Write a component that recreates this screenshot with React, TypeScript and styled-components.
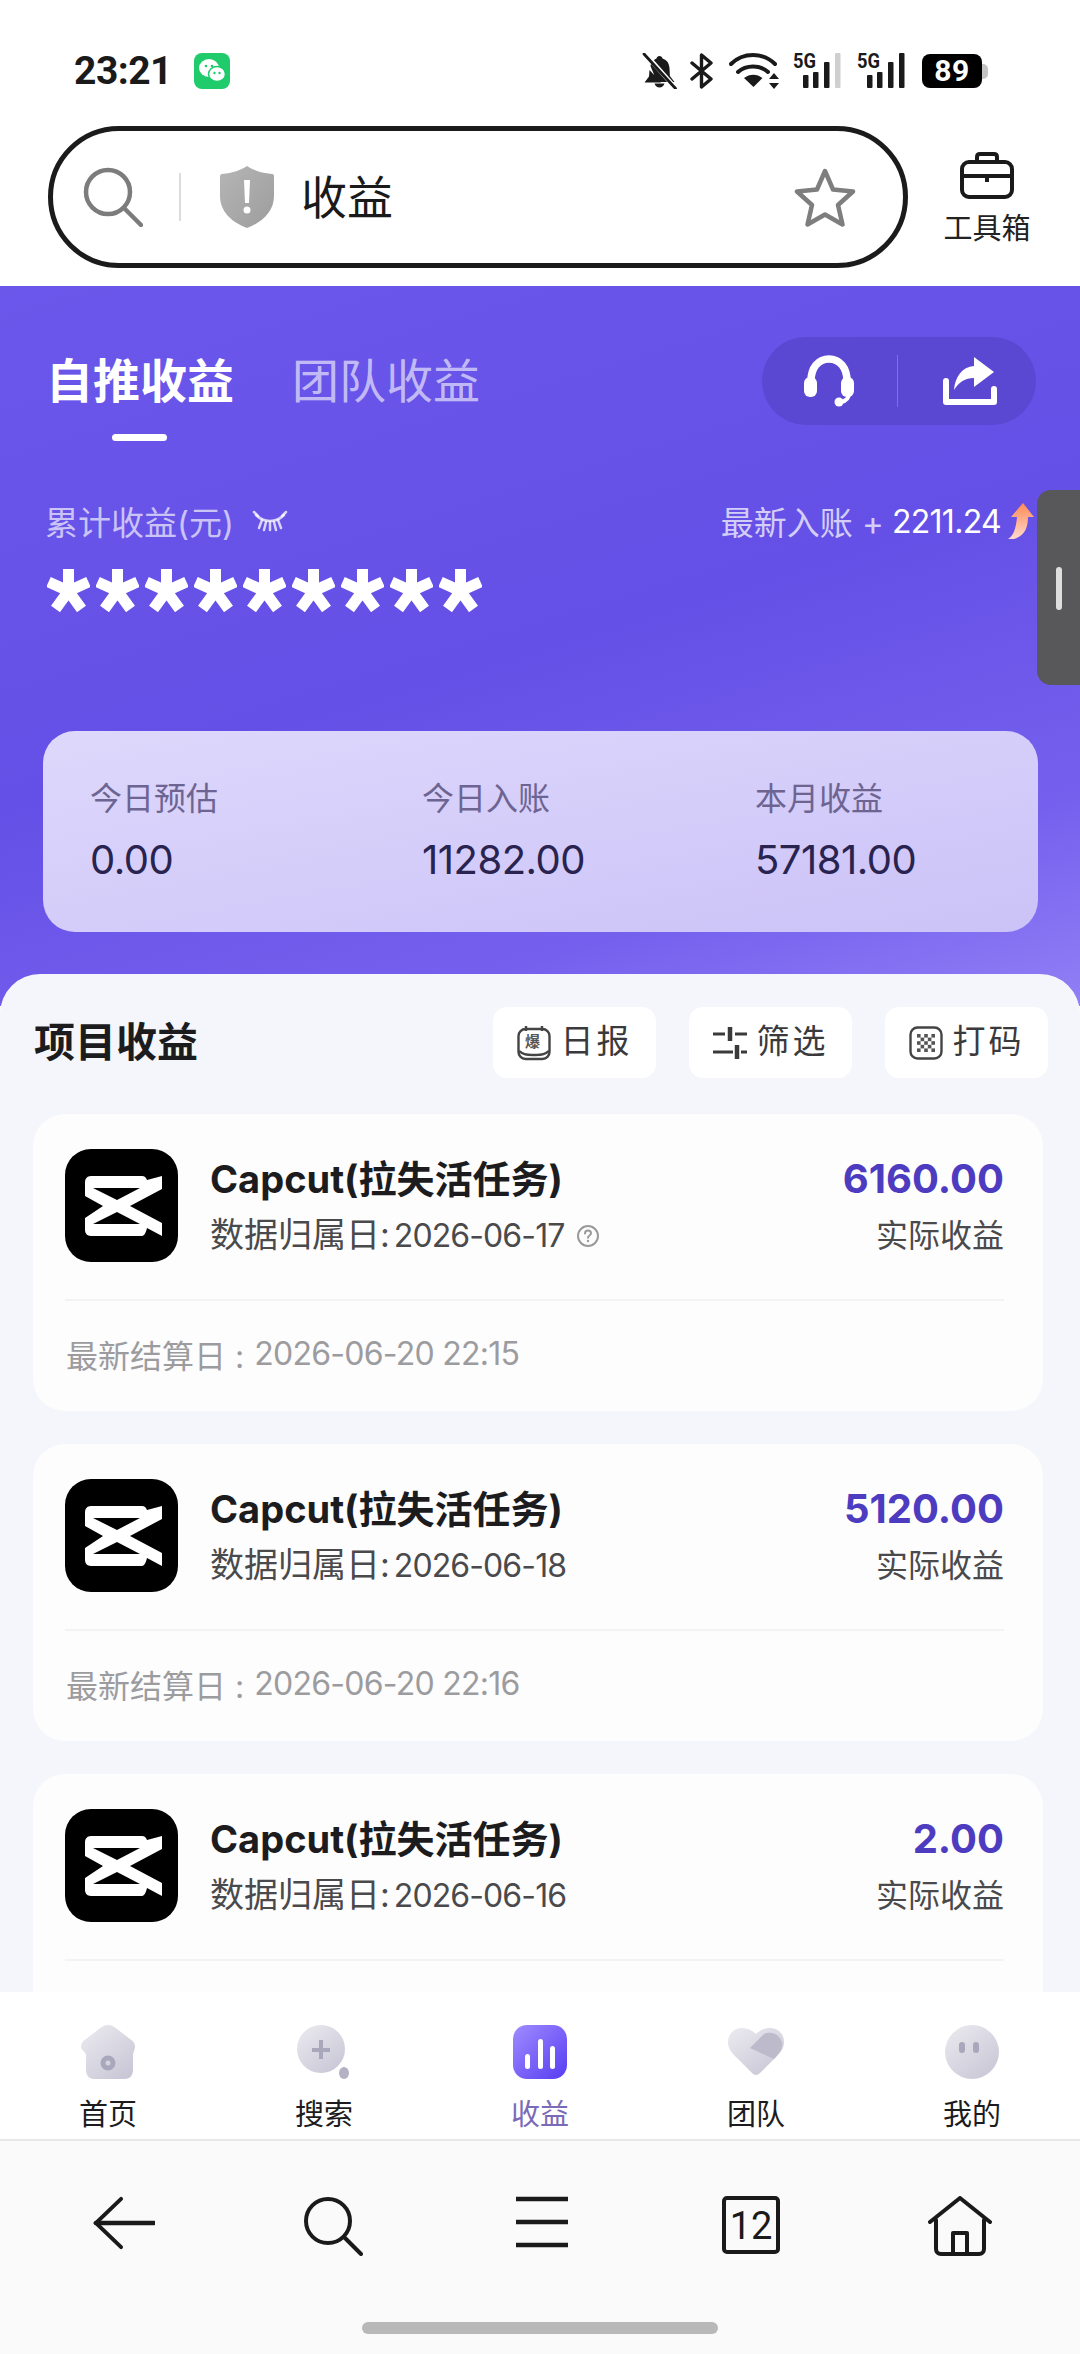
import { ReactNode } from "react";
import styled, { createGlobalStyle } from "styled-components";

const GlobalStyle = createGlobalStyle`
  html, body {
    margin: 0;
    padding: 0;
    background: #fff;
  }
  * {
    box-sizing: border-box;
  }
`;

const FONT = `Inter, Roboto, "Noto Sans CJK SC", sans-serif`;

const Page = styled.div`
  position: relative;
  width: 1080px;
  height: 2354px;
  overflow: hidden;
  display: flex;
  flex-direction: column;
  font-family: ${FONT};
  background: #fff;
  color: #1c1c1e;
`;

/* status bar */
const StatusBar = styled.div`
  height: 126px;
  flex: none;
  padding: 52px 98px 0 74px;
  display: flex;
  align-items: flex-start;
  justify-content: space-between;
`;
const StatusLeft = styled.div`
  display: flex;
  align-items: center;
  gap: 22px;
  height: 38px;
`;
const Clock = styled.span`
  font-family: Roboto, sans-serif;
  font-size: 39px;
  font-weight: 700;
  letter-spacing: -0.5px;
  color: #1a1a1a;
`;
const WeChat = styled.div`
  width: 36px;
  height: 36px;
  border-radius: 8px;
  background: #1fcb6b;
  display: flex;
  align-items: center;
  justify-content: center;
`;
const StatusRight = styled.div`
  display: flex;
  align-items: center;
  height: 38px;
`;
const StatusSlot = styled.div<{ $gap: number }>`
  display: flex;
  margin-left: ${(p) => p.$gap}px;
`;
const Battery = styled.div`
  position: relative;
  width: 60px;
  height: 34px;
  border-radius: 8px;
  background: #000;
  color: #fff;
  font-family: Roboto, sans-serif;
  font-size: 30px;
  font-weight: 700;
  line-height: 34px;
  text-align: center;
  letter-spacing: 0.5px;
`;
const BatteryNub = styled.span`
  position: absolute;
  right: -6px;
  top: 10px;
  width: 6px;
  height: 15px;
  border-radius: 0 5px 5px 0;
  background: #c4c4c4;
`;

/* address bar */
const AddressRow = styled.div`
  height: 160px;
  flex: none;
  padding-left: 48px;
  display: flex;
  align-items: flex-start;
`;
const SearchBox = styled.div`
  width: 860px;
  height: 142px;
  border: 5px solid #1b1b1b;
  border-radius: 71px;
  display: flex;
  align-items: center;
  padding-left: 30px;
`;
const SearchDivider = styled.div`
  width: 2px;
  height: 48px;
  margin: 0 39px 0 36px;
  background: #dcdcdc;
`;
const AddressText = styled.span`
  flex: 1;
  margin-left: 27px;
  font-size: 46px;
  line-height: 60px;
  color: #1a1a1a;
`;
const StarSlot = styled.div`
  margin-right: 47px;
  display: flex;
`;
const ToolBox = styled.div`
  width: 158px;
  padding-top: 26px;
  display: flex;
  flex-direction: column;
  align-items: center;
  gap: 14px;
  font-size: 29px;
  line-height: 32px;
  color: #222;
`;

/* purple area */
const Body = styled.div`
  flex: 1;
  min-height: 0;
  display: flex;
  flex-direction: column;
  background: linear-gradient(163deg, #6b57ea 0, #6450e6 50%, #7560ee 80%, #917ff5 100%) no-repeat;
  background-size: 100% 720px;
`;
const Hero = styled.div`
  flex: none;
  height: 688px;
  padding: 51px 42px 0 43px;
  color: #fff;
`;
const TabRow = styled.div`
  display: flex;
  align-items: center;
  justify-content: space-between;
  height: 88px;
`;
const Tabs = styled.div`
  display: flex;
  gap: 58px;
  padding-left: 3px;
`;
const Tab = styled.span<{ $active?: boolean }>`
  font-size: 47px;
  line-height: 60px;
  font-weight: ${(p) => (p.$active ? 700 : 400)};
  color: ${(p) => (p.$active ? "#fff" : "rgba(255,255,255,0.62)")};
`;
const ActionPill = styled.div`
  width: 274px;
  height: 88px;
  margin-right: 2px;
  border-radius: 44px;
  background: #5b48d2;
  display: flex;
  align-items: center;
  padding-left: 42px;
`;
const PillDivider = styled.div`
  width: 1px;
  height: 52px;
  margin: 0 45px 0 43px;
  background: rgba(255, 255, 255, 0.22);
`;
const TabIndicator = styled.div`
  width: 55px;
  height: 7px;
  border-radius: 4px;
  margin: 9px 0 0 69px;
  background: #fff;
`;
const SummaryRow = styled.div`
  display: flex;
  align-items: center;
  justify-content: space-between;
  height: 36px;
  margin-top: 62px;
  padding: 0 4px 0 2px;
`;
const SummaryLabel = styled.div`
  display: flex;
  align-items: center;
  gap: 18px;
  font-size: 33px;
  color: rgba(255, 255, 255, 0.66);
`;
const LatestEntry = styled.div`
  display: flex;
  align-items: center;
  font-size: 33px;
  color: rgba(255, 255, 255, 0.72);
`;
const LatestValue = styled.span`
  margin: 0 7px 0 8px;
  font-size: 32px;
  color: #fff;
  letter-spacing: -0.7px;
`;
const Masked = styled.div`
  margin-top: 16px;
  height: 70px;
  padding-left: 4px;
  display: flex;
  gap: 6px;
  align-items: center;
`;
const StatsCard = styled.div`
  height: 201px;
  margin-top: 106px;
  padding: 48px 0 0 47px;
  border-radius: 32px;
  display: grid;
  grid-template-columns: 332px 333px 1fr;
  background: linear-gradient(170deg, #ded8fc 0%, #cbc2f7 100%);
`;
const StatCell = styled.div`
  display: flex;
  flex-direction: column;
`;
const StatLabel = styled.span`
  font-size: 32px;
  line-height: 40px;
  color: #6d6492;
`;
const StatValue = styled.span`
  margin-top: 15px;
  font-size: 40px;
  line-height: 52px;
  letter-spacing: -0.5px;
  color: #29234f;
`;

/* white sheet */
const Sheet = styled.div`
  flex: 1;
  min-height: 0;
  overflow: hidden;
  border-radius: 40px 40px 0 0;
  background: #f5f6fb;
`;
const SheetHead = styled.div`
  display: flex;
  align-items: center;
  padding: 33px 32px 0 34px;
`;
const SheetTitle = styled.h2`
  flex: 1;
  margin: 0;
  padding-bottom: 8px;
  font-size: 41px;
  font-weight: 700;
  color: #1c1c1e;
`;
const HeadButtons = styled.div`
  display: flex;
  gap: 33px;
`;
const HeadButton = styled.div`
  width: 163px;
  height: 71px;
  border-radius: 14px;
  background: #fff;
  display: flex;
  align-items: center;
  justify-content: center;
  gap: 10px;
  font-size: 33px;
  letter-spacing: 3px;
  color: #3a3a3c;
`;
const ButtonLabel = styled.span`
  padding-bottom: 7px;
`;
const CardList = styled.div`
  display: flex;
  flex-direction: column;
  gap: 33px;
  margin: 36px 37px 0 33px;
`;
const Card = styled.div`
  flex: none;
  height: 297px;
  border-radius: 32px;
  background: #fdfdfe;
  padding: 35px 39px 0 32px;
`;
const CardTop = styled.div`
  display: flex;
  height: 115px;
`;
const AppIcon = styled.div`
  flex: none;
  width: 113px;
  height: 113px;
  border-radius: 26px;
  background: #000;
  display: flex;
`;
const CardText = styled.div`
  flex: 1;
  padding: 7px 0 0 32px;
`;
const CardTitle = styled.div`
  font-size: 38px;
  line-height: 46px;
  font-weight: 700;
  color: #1c1c1e;
`;
const CardSub = styled.div`
  margin-top: 13px;
  display: flex;
  align-items: center;
  gap: 12px;
  font-size: 34px;
  line-height: 40px;
  color: #4a4a4c;
`;
const DateText = styled.span`
  margin-left: 4px;
  font-size: 32px;
  letter-spacing: -0.9px;
`;
const CardAmounts = styled.div`
  padding-top: 7px;
  text-align: right;
`;
const Amount = styled.div`
  font-size: 40px;
  line-height: 46px;
  font-weight: 700;
  color: #4e3cc0;
`;
const AmountLabel = styled.div`
  margin-top: 14px;
  font-size: 32px;
  line-height: 40px;
  color: #4a4a4c;
`;
const CardRule = styled.div`
  height: 2px;
  margin-top: 35px;
  background: #f3f3f6;
`;
const CardFoot = styled.div`
  height: 105px;
  display: flex;
  align-items: center;
  gap: 10px;
  padding-left: 1px;
  font-size: 32px;
  color: #9c9c9f;
`;
const FootDate = styled.span`
  letter-spacing: -0.75px;
`;

/* app tab bar */
const AppTabs = styled.nav`
  flex: none;
  height: 149px;
  padding-top: 33px;
  display: grid;
  grid-template-columns: repeat(5, 1fr);
  background: #fff;
  border-bottom: 2px solid #e8e8e8;
`;
const AppTab = styled.div<{ $active?: boolean }>`
  display: flex;
  flex-direction: column;
  align-items: center;
  gap: 20px;
  font-size: 29px;
  line-height: 32px;
  color: ${(p) => (p.$active ? "#7a6ab8" : "#1c1c1e")};
`;
const TabGlyph = styled.div`
  height: 54px;
  display: flex;
  align-items: center;
`;

/* browser bar */
const BrowserBar = styled.div`
  flex: none;
  height: 213px;
  background: #fafafa;
  display: flex;
  flex-direction: column;
  align-items: center;
`;
const BrowserIcons = styled.div`
  width: 100%;
  height: 181px;
  padding: 55px 16px 0 19px;
  display: grid;
  grid-template-columns: repeat(5, 1fr);
  justify-items: center;
  align-items: start;
`;
const HomeBar = styled.div`
  width: 356px;
  height: 12px;
  border-radius: 6px;
  background: #b8b8b8;
`;

/* overlay */
const SideHandle = styled.div`
  position: absolute;
  top: 490px;
  right: 0;
  width: 43px;
  height: 195px;
  border-radius: 14px 0 0 14px;
  background: #58585a;
`;
const SideGrip = styled.div`
  position: absolute;
  left: 19px;
  top: 77px;
  width: 6px;
  height: 43px;
  border-radius: 3px;
  background: #dedede;
`;

const BellOff = () => (
  <svg width="36" height="36" viewBox="0 0 36 36">
    <path d="M17.5 3c1.6 0 2.700.9 3 2.400 4.600 1.400 6.700 5 7 9.800l.4 7.800 4.600 6H15L8.500 13C8.900 9.500 11.700 6.500 14.500 5.400 14.800 3.900 15.900 3 17.500 3zM7.500 17l11.500 12.500H2.500l4.500-6z M12.500 30.500h10c-.8 2.500-2.800 4-5 4s-4.200-1.500-5-4z" fill="#1a1a1a" />
    <path d="M2.500 0L33.500 35" stroke="#fff" strokeWidth="4.500" />
    <path d="M2 1L33.500 35.500" stroke="#1a1a1a" strokeWidth="2.800" strokeLinecap="round" />
  </svg>
);

const BluetoothIcon = () => (
  <svg width="24" height="36" viewBox="0 0 24 36" fill="none" stroke="#1a1a1a" strokeWidth="3.400" strokeLinecap="round" strokeLinejoin="round">
    <path d="M2 10l19 16-9.500 8V2L21 10 2 26" />
  </svg>
);

const WifiIcon = () => (
  <svg width="50" height="36" viewBox="0 0 50 36">
    <g fill="none" stroke="#1a1a1a" strokeWidth="4" strokeLinecap="round">
      <path d="M2 11C14-1 34-1 46 11" />
      <path d="M9 19c8-7.500 22-7.500 30 0" />
    </g>
    <path d="M15 25c5.500-4.500 13-4.500 18.500 0L24.500 34z" fill="#1a1a1a" />
    <path d="M45 20l-5 6h10zM45 36l-5-6h10z" fill="#1a1a1a" />
  </svg>
);

const Signal = ({ last }: { last: string }) => (
  <svg width="48" height="44" viewBox="0 -4 48 44">
    <text x="0" y="15" fontFamily="Roboto, sans-serif" fontSize="20" fontWeight="700" fill="#1a1a1a" textLength="23" lengthAdjust="spacingAndGlyphs">5G</text>
    <rect x="10" y="22" width="5.500" height="13" rx="1" fill="#1a1a1a" />
    <rect x="20" y="19" width="5.500" height="16" rx="1" fill="#1a1a1a" />
    <rect x="31" y="9" width="5.500" height="26" rx="1" fill="#1a1a1a" />
    <rect x="42" y="0" width="5.500" height="35" rx="1" fill={last} />
  </svg>
);

const MagnifierIcon = ({ color, size, sw }: { color: string; size: number; sw: number }) => (
  <svg width={size} height={size} viewBox="0 0 60 60" fill="none" stroke={color} strokeWidth={sw} strokeLinecap="round">
    <ellipse cx="25" cy="25" rx="22" ry="22" />
    <path d="M41 41l17 17" />
  </svg>
);

const ShieldIcon = () => (
  <svg width="54" height="62" viewBox="0 0 54 62">
    <defs>
      <linearGradient id="shield" x1="0" y1="0" x2="1" y2="1">
        <stop offset="0" stopColor="#b5b5b5" />
        <stop offset="1" stopColor="#9d9d9d" />
      </linearGradient>
    </defs>
    <path d="M27 0c6 4 14 7 25 8 2 0 2 2 2 4v18c0 15-11 26-27 32C11 56 0 45 0 30V12c0-2 0-4 2-4C13 7 21 4 27 0z" fill="url(#shield)" />
    <path d="M24 14h6l-1 23h-4z" fill="#fff" />
    <circle cx="27" cy="44" r="3.500" fill="#fff" />
  </svg>
);

const StarIcon = () => (
  <svg width="62" height="60" viewBox="0 0 62 60" fill="none" stroke="#7e7e7e" strokeWidth="4.500" strokeLinejoin="round">
    <path d="M31 4l8 18.500 20 2-15 13.500 4.500 19.500L31 47.500 13.500 57.500 18 38 3 24.500l20-2z" />
  </svg>
);

const ToolboxIcon = () => (
  <svg width="54" height="47" viewBox="0 0 54 47" fill="none" stroke="#1a1a1a" strokeWidth="4" strokeLinejoin="round">
    <rect x="2" y="10" width="50" height="35" rx="7" />
    <path d="M17 10V5c0-2 1-3 3-3h14c2 0 3 1 3 3v5" />
    <path d="M2 24h50M27 24v6" />
  </svg>
);

const HeadsetIcon = () => (
  <svg width="50" height="52" viewBox="0 0 50 52">
    <path d="M7 26C7 13 14 4 25 4s18 9 18 22" fill="none" stroke="#fff" strokeWidth="7.500" />
    <rect x="0" y="22" width="13" height="20" rx="6" fill="#fff" />
    <rect x="37" y="22" width="13" height="20" rx="6" fill="#fff" />
    <path d="M45 38c0 5-3 8-8 9" fill="none" stroke="#fff" strokeWidth="4" />
    <circle cx="35" cy="47" r="4.500" fill="#fff" />
  </svg>
);

const ShareIcon = () => (
  <svg width="54" height="48" viewBox="0 0 54 48">
    <path d="M3 24v21h48V32" fill="none" stroke="#fff" strokeWidth="6" strokeLinejoin="round" strokeLinecap="round" />
    <path d="M31 0l20 15-20 15v-9C22 21 16 25 11 33 12 20 19 10 31 9z" fill="#fff" />
  </svg>
);

const ClosedEye = () => (
  <svg width="36" height="22" viewBox="0 0 36 22" fill="none" stroke="rgba(255,255,255,0.75)" strokeWidth="2.500" strokeLinecap="round">
    <path d="M4 5c8 8 20 8 28 0" />
    <path d="M2 2l4 4M34 2l-4 4M10 10l-3 8M26 10l3 8M18 12v8M14 12l-2 8M22 12l2 8" />
  </svg>
);

const UpArrow = () => (
  <svg width="26" height="36" viewBox="0 0 26 36">
    <defs>
      <linearGradient id="arrow" x1="0" y1="0" x2="0" y2="1">
        <stop offset="0" stopColor="#ff8a55" />
        <stop offset="1" stopColor="#ffd9cc" />
      </linearGradient>
    </defs>
    <path d="M15 0l11 14h-6c0 10-3 19-14 22H0c5-3 8-10 9-22H3z" fill="url(#arrow)" />
  </svg>
);

const MaskStar = () => (
  <svg width="43" height="43" viewBox="0 0 43 43" fill="none" stroke="#fff" strokeWidth="11">
    <path d="M21.500 22V0M21.500 22L1.500 13M21.500 22L41.500 13M21.500 22L8.500 40M21.500 22L34.500 40" />
  </svg>
);

const DailyIcon = () => (
  <svg width="34" height="36" viewBox="0 0 34 36" fill="none" stroke="#444" strokeWidth="2.400">
    <rect x="1.500" y="4" width="31" height="30" rx="7" />
    <path d="M9 1v5M25 1v5M2 26c4 3 6 4 15 4s11-1 15-4" />
    <text x="17" y="22" textAnchor="middle" fontSize="15" fontWeight="700" stroke="none" fill="#555" fontFamily='"Noto Sans CJK SC", sans-serif'>爆</text>
  </svg>
);

const SlidersIcon = () => (
  <svg width="34" height="34" viewBox="0 0 34 34" stroke="#3a3a3c" strokeWidth="3">
    <path d="M0 8h12M22 8h12M0 26h20M28 26h6" fill="none" />
    <path d="M17 1v14M24 19v14" strokeWidth="4.500" fill="none" />
  </svg>
);

const CodeIcon = () => {
  const dots: ReactNode[] = [];
  for (let r = 0; r < 5; r++) {
    for (let c = 0; c < 5; c++) {
      if ((r + c) % 2 === 0) {
        dots.push(<rect key={`${r}-${c}`} x={8 + c * 3.600} y={8 + r * 3.600} width="3.600" height="3.600" fill="#555" />);
      }
    }
  }
  return (
    <svg width="34" height="34" viewBox="0 0 34 34">
      <rect x="1.500" y="1.500" width="31" height="31" rx="7" fill="none" stroke="#444" strokeWidth="2.400" />
      {dots}
    </svg>
  );
};

const CapCutLogo = () => (
  <svg width="113" height="113" viewBox="0 0 113 113">
    <path
      fillRule="evenodd"
      fill="#fff"
      d="M26 27H77c2.500 0 4 1.500 5 4L97 27V40L65 57 97 74V87L82 79c-1 4-2.500 8-5 8H26c-4 0-6-3-6-6V69L38 57 20 47V33c0-3 2-6 6-6zM28 39L52 51 75 39zM28 75H75L52 63z"
    />
  </svg>
);

const HelpDot = () => (
  <svg width="24" height="24" viewBox="0 0 24 24" fill="none" stroke="#9a9a9a" strokeWidth="2">
    <circle cx="12" cy="12" r="10" />
    <path d="M9 9.500c0-2 1.500-3 3-3s3 1 3 2.800c0 2.200-3 2.200-3 4.500" strokeLinecap="round" />
    <circle cx="12" cy="17" r="1.200" fill="#9a9a9a" stroke="none" />
  </svg>
);

const GreyDefs = ({ id }: { id: string }) => (
  <defs>
    <linearGradient id={id} x1="0" y1="0" x2="0.800" y2="1">
      <stop offset="0" stopColor="#ecebf0" />
      <stop offset="1" stopColor="#c9c7d6" />
    </linearGradient>
  </defs>
);

const HomeTabIcon = () => (
  <svg width="54" height="54" viewBox="0 0 54 54">
    <GreyDefs id="tabHome" />
    <path d="M27 0c4 0 6 2 9 4l13 10c3 2 5 4 5 8 0 3-2 5-2 8v15c0 5-3 9-8 9H13c-5 0-8-4-8-9V30c0-3-5-5-5-8 0-4 2-6 5-8L18 4c3-2 5-4 9-4z" fill="url(#tabHome)" />
    <circle cx="27" cy="38" r="5" fill="none" stroke="#a9a7bb" strokeWidth="5" />
  </svg>
);

const SearchTabIcon = () => (
  <svg width="54" height="54" viewBox="0 0 54 54">
    <GreyDefs id="tabSearch" />
    <ellipse cx="24" cy="24" rx="24" ry="24" fill="url(#tabSearch)" />
    <path d="M24 15v19M15 25h18" stroke="#a9a7bb" strokeWidth="4" />
    <ellipse cx="47" cy="48" rx="5" ry="6" fill="#b3b1c3" />
  </svg>
);

const EarningsTabIcon = () => (
  <svg width="54" height="54" viewBox="0 0 54 54">
    <defs>
      <linearGradient id="tabEarn" x1="0" y1="0" x2="1" y2="1">
        <stop offset="0" stopColor="#a08cff" />
        <stop offset="1" stopColor="#573cf2" />
      </linearGradient>
    </defs>
    <rect width="54" height="54" rx="14" fill="url(#tabEarn)" />
    <rect x="12" y="29" width="5" height="15" rx="2.500" fill="#fff" />
    <rect x="25" y="14" width="5" height="30" rx="2.500" fill="#fff" />
    <rect x="37" y="21" width="5" height="23" rx="2.500" fill="#fff" />
  </svg>
);

const TeamTabIcon = () => (
  <svg width="56" height="48" viewBox="0 0 56 48">
    <GreyDefs id="tabTeam" />
    <path d="M14 0c5 0 10 2 14 6 4-4 9-6 14-6 8 0 14 6 14 14 0 6-3 10-8 15L32 45c-2.500 2.500-5.500 2.500-8 0L8 29C3 24 0 20 0 14 0 6 6 0 14 0z" fill="url(#tabTeam)" />
    <path d="M22 20L36 6c5-3 14-1 17 6 2 5 1 9-2 13L46 31z" fill="#bcbacb" />
  </svg>
);

const ProfileTabIcon = () => (
  <svg width="54" height="54" viewBox="0 0 54 54">
    <GreyDefs id="tabMine" />
    <ellipse cx="27" cy="27" rx="27" ry="27" fill="url(#tabMine)" />
    <rect x="14" y="17" width="6" height="11" rx="3" fill="#a9a7bb" />
    <rect x="28" y="17" width="6" height="11" rx="3" fill="#a9a7bb" />
  </svg>
);

const BackIcon = () => (
  <svg width="62" height="54" viewBox="0 0 64 54" fill="none" stroke="#1a1a1a" strokeWidth="4" strokeLinecap="round">
    <path d="M29 2L3 27l26 25" />
    <path d="M3 27h60" strokeWidth="4.500" />
  </svg>
);

const MenuIcon = () => (
  <svg width="52" height="52" viewBox="0 0 52 52" stroke="#1a1a1a" strokeWidth="4.500">
    <path d="M0 3h52M0 26h52M0 49h52" />
  </svg>
);

const TabCountIcon = () => (
  <svg width="58" height="58" viewBox="0 0 58 58">
    <rect x="2" y="2" width="54" height="54" rx="3" fill="none" stroke="#1a1a1a" strokeWidth="4" />
    <text x="29" y="43" textAnchor="middle" fontFamily="Roboto, sans-serif" fontSize="38" fill="#1a1a1a">12</text>
  </svg>
);

const HouseIcon = () => (
  <svg width="64" height="60" viewBox="0 0 64 60" fill="none" stroke="#1a1a1a" strokeWidth="4" strokeLinejoin="round" strokeLinecap="round">
    <path d="M2 26L32 2l30 24" />
    <path d="M8 24v29c0 3 2 5 5 5h38c3 0 5-2 5-5V24" />
    <path d="M25 58V37h14v21" />
  </svg>
);

// the third card runs under the tab bar, its footer is never on screen
const projects = [
  { amount: "6160.00", date: "2026-06-17", settled: "2026-06-20 22:15", help: true },
  { amount: "5120.00", date: "2026-06-18", settled: "2026-06-20 22:16", help: false },
  { amount: "2.00", date: "2026-06-16", help: false },
];

const stats = [
  { label: "今日预估", value: "0.00" },
  { label: "今日入账", value: "11282.00" },
  { label: "本月收益", value: "57181.00" },
];

const appTabs = [
  { label: "首页", icon: <HomeTabIcon /> },
  { label: "搜索", icon: <SearchTabIcon /> },
  { label: "收益", icon: <EarningsTabIcon />, active: true },
  { label: "团队", icon: <TeamTabIcon /> },
  { label: "我的", icon: <ProfileTabIcon /> },
];

export default function App() {
  return (
    <Page>
      <GlobalStyle />
      <StatusBar>
        <StatusLeft>
          <Clock>23:21</Clock>
          <WeChat>
            <svg width="28" height="26" viewBox="0 0 28 26" fill="#fff">
              <ellipse cx="11" cy="10" rx="10" ry="9" />
              <ellipse cx="19" cy="16" rx="8.500" ry="7.500" stroke="#1fcb6b" strokeWidth="1.500" />
              <circle cx="8" cy="8" r="1.300" fill="#1fcb6b" />
              <circle cx="14" cy="8" r="1.300" fill="#1fcb6b" />
              <circle cx="16.500" cy="15" r="1.200" fill="#1fcb6b" />
              <circle cx="21.500" cy="15" r="1.200" fill="#1fcb6b" />
            </svg>
          </WeChat>
        </StatusLeft>
        <StatusRight>
          <BellOff />
          <StatusSlot $gap={12}><BluetoothIcon /></StatusSlot>
          <StatusSlot $gap={15}><WifiIcon /></StatusSlot>
          <StatusSlot $gap={14}><Signal last="#cfcfcf" /></StatusSlot>
          <StatusSlot $gap={16}><Signal last="#1a1a1a" /></StatusSlot>
          <StatusSlot $gap={17}>
            <Battery>
              89
              <BatteryNub />
            </Battery>
          </StatusSlot>
        </StatusRight>
      </StatusBar>

      <AddressRow>
        <SearchBox>
          <MagnifierIcon color="#7c7c7c" size={60} sw={4.500} />
          <SearchDivider />
          <ShieldIcon />
          <AddressText>收益</AddressText>
          <StarSlot><StarIcon /></StarSlot>
        </SearchBox>
        <ToolBox>
          <ToolboxIcon />
          工具箱
        </ToolBox>
      </AddressRow>

      <Body>
        <Hero>
          <TabRow>
            <Tabs>
              <Tab $active>自推收益</Tab>
              <Tab>团队收益</Tab>
            </Tabs>
            <ActionPill>
              <HeadsetIcon />
              <PillDivider />
              <ShareIcon />
            </ActionPill>
          </TabRow>
          <TabIndicator />
          <SummaryRow>
            <SummaryLabel>
              累计收益(元)
              <ClosedEye />
            </SummaryLabel>
            <LatestEntry>
              最新入账 +<LatestValue>2211.24</LatestValue>
              <UpArrow />
            </LatestEntry>
          </SummaryRow>
          <Masked>
            {Array.from({ length: 9 }, (_, i) => (
              <MaskStar key={i} />
            ))}
          </Masked>
          <StatsCard>
            {stats.map((s) => (
              <StatCell key={s.label}>
                <StatLabel>{s.label}</StatLabel>
                <StatValue>{s.value}</StatValue>
              </StatCell>
            ))}
          </StatsCard>
        </Hero>

        <Sheet>
          <SheetHead>
            <SheetTitle>项目收益</SheetTitle>
            <HeadButtons>
              <HeadButton><DailyIcon /><ButtonLabel>日报</ButtonLabel></HeadButton>
              <HeadButton><SlidersIcon /><ButtonLabel>筛选</ButtonLabel></HeadButton>
              <HeadButton><CodeIcon /><ButtonLabel>打码</ButtonLabel></HeadButton>
            </HeadButtons>
          </SheetHead>
          <CardList>
            {projects.map((p) => (
              <Card key={p.date}>
                <CardTop>
                  <AppIcon><CapCutLogo /></AppIcon>
                  <CardText>
                    <CardTitle>Capcut(拉失活任务)</CardTitle>
                    <CardSub>
                      <span>数据归属日:<DateText>{p.date}</DateText></span>
                      {p.help && <HelpDot />}
                    </CardSub>
                  </CardText>
                  <CardAmounts>
                    <Amount>{p.amount}</Amount>
                    <AmountLabel>实际收益</AmountLabel>
                  </CardAmounts>
                </CardTop>
                <CardRule />
                {p.settled && (
                  <CardFoot>
                    <span>最新结算日 :</span>
                    <FootDate>{p.settled}</FootDate>
                  </CardFoot>
                )}
              </Card>
            ))}
          </CardList>
        </Sheet>
      </Body>

      <AppTabs>
        {appTabs.map((t) => (
          <AppTab key={t.label} $active={t.active}>
            <TabGlyph>{t.icon}</TabGlyph>
            {t.label}
          </AppTab>
        ))}
      </AppTabs>

      <BrowserBar>
        <BrowserIcons>
          <BackIcon />
          <MagnifierIcon color="#1a1a1a" size={60} sw={4} />
          <MenuIcon />
          <TabCountIcon />
          <HouseIcon />
        </BrowserIcons>
        <HomeBar />
      </BrowserBar>

      <SideHandle>
        <SideGrip />
      </SideHandle>
    </Page>
  );
}
